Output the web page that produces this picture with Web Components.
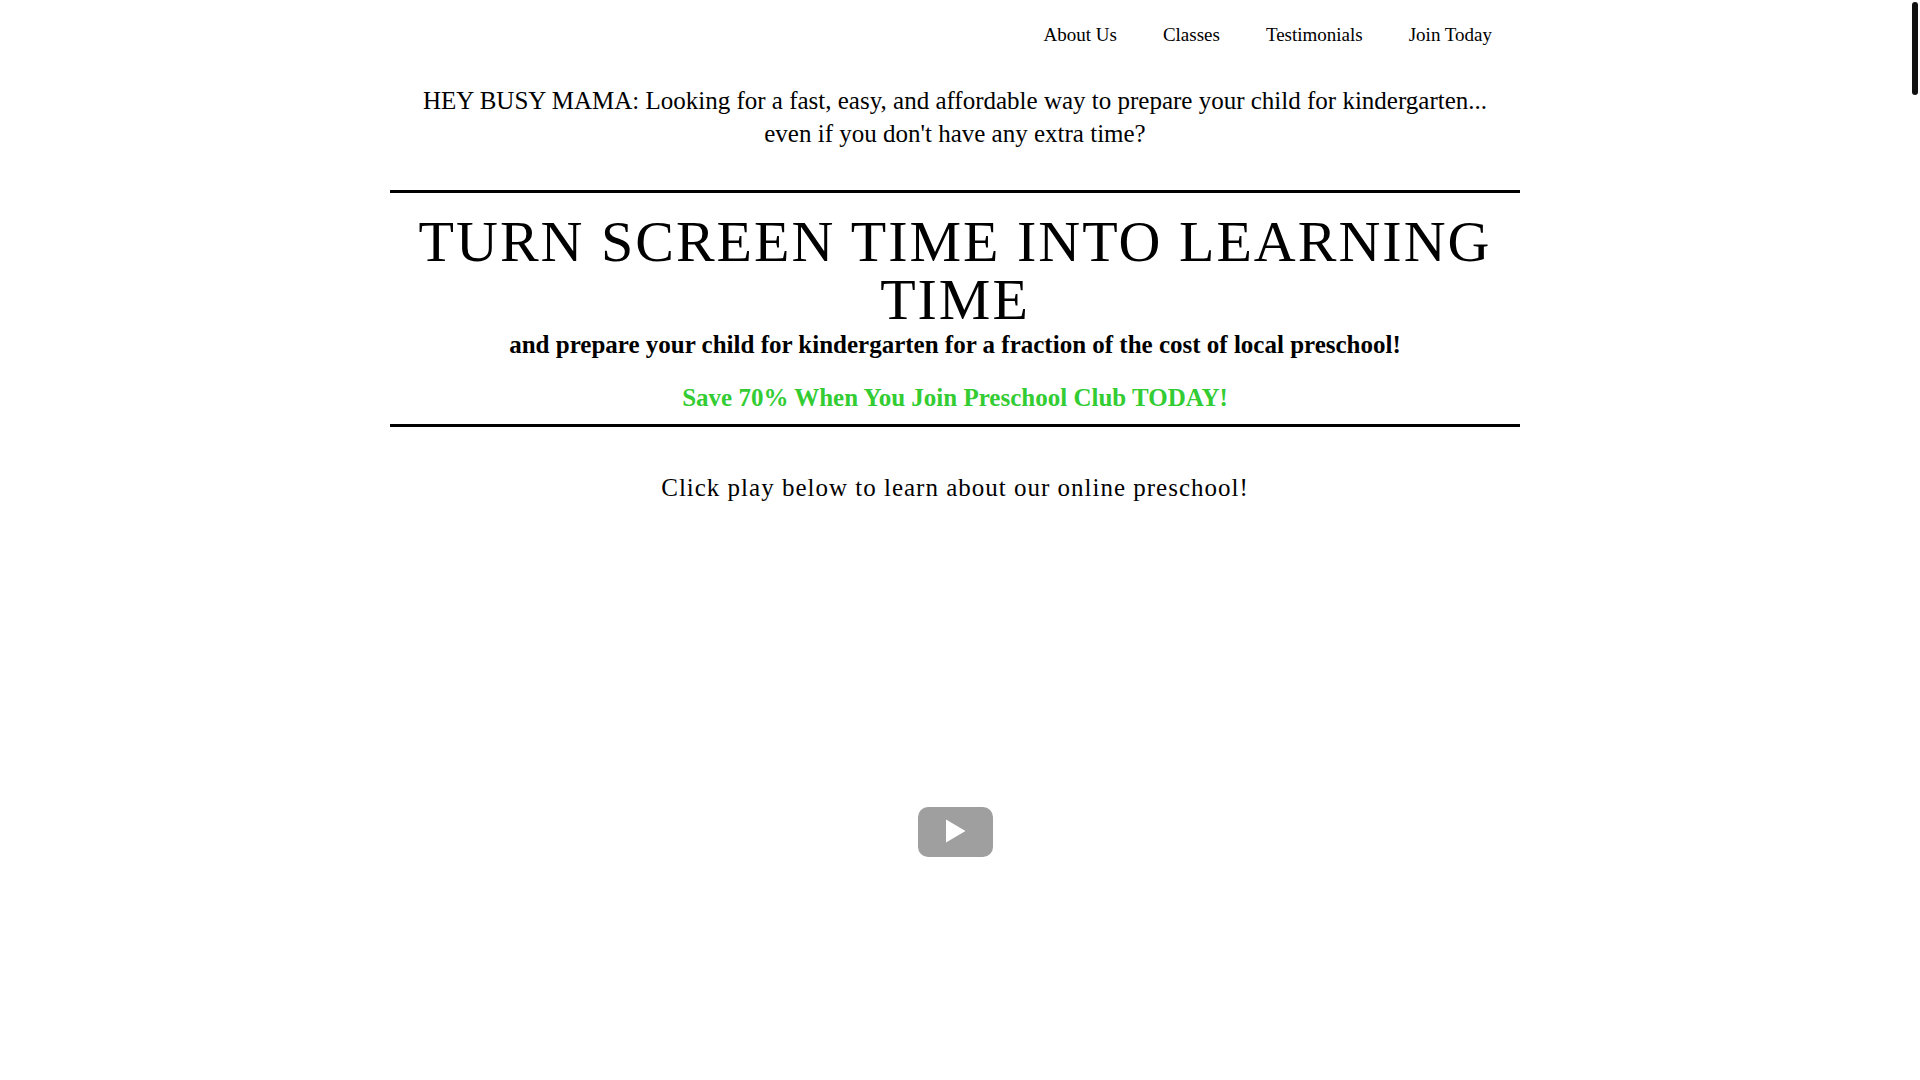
<!DOCTYPE html>
<html lang="en">
<head>
<meta charset="utf-8">
<title>Preschool Club</title>
<style>
  html, body { margin: 0; background: #fff; }
  body { font-family: "Liberation Serif", "Times New Roman", serif; color: #000; }
</style>
</head>
<body>
<club-page>
  <site-nav slot="nav">
    <nav-link href="#about">About Us</nav-link>
    <nav-link href="#classes">Classes</nav-link>
    <nav-link href="#testimonials">Testimonials</nav-link>
    <nav-link href="#join">Join Today</nav-link>
  </site-nav>
  <lead-text>HEY BUSY MAMA: Looking for a fast, easy, and affordable way to prepare your child for kindergarten... even if you don't have any extra time?</lead-text>
  <hero-banner>
    <span slot="title">TURN SCREEN TIME INTO LEARNING TIME</span>
    <span slot="subtitle">and prepare your child for kindergarten for a fraction of the cost of local preschool!</span>
    <span slot="offer">Save 70% When You Join Preschool Club TODAY!</span>
  </hero-banner>
  <video-block>Click play below to learn about our online preschool!</video-block>
</club-page>
<page-scrollbar></page-scrollbar>
<script>
  const define = (name, html) => customElements.define(name, class extends HTMLElement {
    constructor() {
      super();
      this.attachShadow({ mode: "open" }).innerHTML = html;
    }
  });

  define("club-page", `
    <style>
      :host { display: block; padding-right: 10px; }
      .column { max-width: 1130px; margin: 0 auto; }
    </style>
    <div class="column">
      <header><slot name="nav"></slot></header>
      <main><slot></slot></main>
    </div>`);

  define("site-nav", `
    <style>
      :host { display: block; }
      nav { display: flex; justify-content: flex-end; gap: 46px; padding: 19px 28px 15px; }
    </style>
    <nav aria-label="Main"><slot></slot></nav>`);

  customElements.define("nav-link", class extends HTMLElement {
    constructor() {
      super();
      this.attachShadow({ mode: "open" }).innerHTML = `
        <style>
          :host { display: block; }
          a { display: block; color: #000; text-decoration: none; font-size: 19px; line-height: 32px; }
        </style>
        <a><slot></slot></a>`;
    }
    connectedCallback() {
      this.shadowRoot.querySelector("a").href = this.getAttribute("href");
    }
  });

  define("lead-text", `
    <style>
      :host { display: block; padding: 18px 20px 40px; }
      p { margin: 0; text-align: center; font-size: 25px; line-height: 33px; }
    </style>
    <p><slot></slot></p>`);

  define("hero-banner", `
    <style>
      :host { display: block; border-top: 3px solid #000; border-bottom: 3px solid #000; padding: 20px 20px 10px; text-align: center; }
      h1, h2, p { margin: 0; }
      h1 { font-size: 58px; line-height: 58px; font-weight: 400; letter-spacing: 2px; }
      h2, p { font-size: 25px; line-height: 32px; font-weight: 700; }
      p { margin-top: 21px; color: #3c3; }
    </style>
    <h1><slot name="title"></slot></h1>
    <h2><slot name="subtitle"></slot></h2>
    <p><slot name="offer"></slot></p>`);

  define("video-block", `
    <style>
      :host { display: block; padding-top: 44px; text-align: center; }
      p { margin: 0; font-size: 25px; line-height: 33px; letter-spacing: 1px; }
      .player { display: flex; align-items: center; justify-content: center; margin-top: 10px; aspect-ratio: 16 / 9; }
      button { display: block; padding: 0; border: 0; background: none; cursor: pointer; }
      svg { display: block; }
    </style>
    <p><slot></slot></p>
    <div class="player">
      <button type="button" aria-label="Play video">
        <svg width="75" height="50" viewBox="0 0 75 50" aria-hidden="true">
          <rect width="75" height="50" rx="10" fill="#9f9f9f"/>
          <path d="M28 12.5V35.5L47.5 24Z" fill="#fff"/>
        </svg>
      </button>
    </div>`);

  define("page-scrollbar", `
    <style>
      :host { display: block; position: fixed; top: 2px; right: 2px; width: 6px; height: 93px; border-radius: 3px; background: #111; }
    </style>`);
</script>
</body>
</html>
